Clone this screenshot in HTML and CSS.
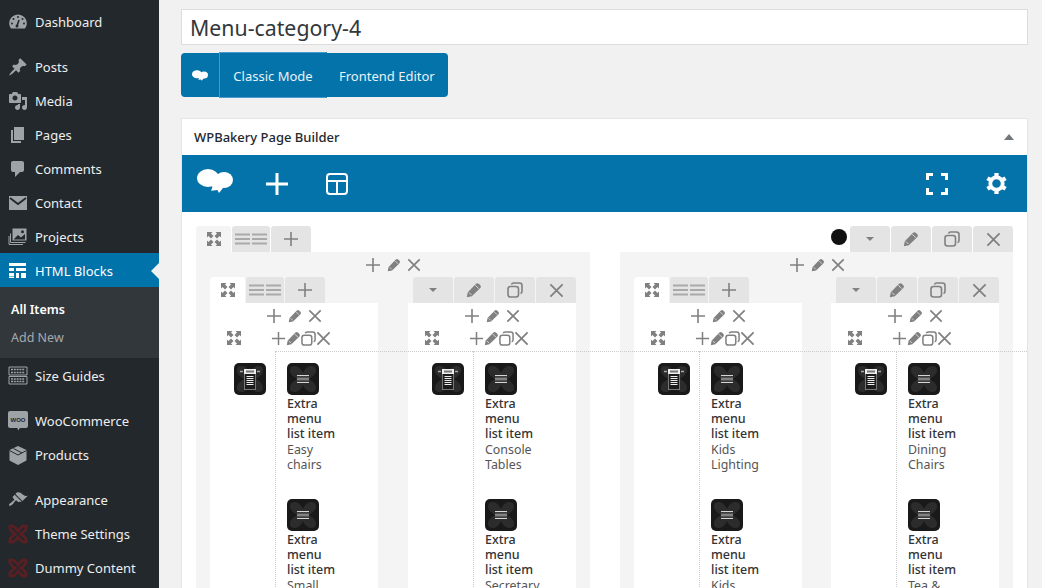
FILE: index.html
```html
<!DOCTYPE html>
<html lang="en">
<head>
    <meta charset="UTF-8">
    <title>Edit HTML Block</title>
    <link rel="stylesheet" href="styles.css">
</head>
<body>
    <svg class="sprite" xmlns="http://www.w3.org/2000/svg">
        <symbol id="i-plus" viewBox="0 0 16 16"><path d="M8 1v14M1 8h14" fill="none" stroke="currentColor" stroke-width="1.6"/></symbol>
        <symbol id="i-x" viewBox="0 0 16 16"><path d="M1.500 1.500l13 13M14.500 1.500l-13 13" fill="none" stroke="currentColor" stroke-width="1.900"/></symbol>
        <symbol id="i-pencil" viewBox="0 0 16 16"><path d="M.8 15.200l1-5 8-8.300c1-1 2.200-1 3.200 0l1.100 1.100c1 1 1 2.200 0 3.200L5.800 14.200z" fill="currentColor"/><path d="M9.300 3.200l3.500 3.500M3 10.500l2.500 2.500" stroke="#fff" stroke-width=".7"/></symbol>
        <symbol id="i-copy" viewBox="0 0 16 16"><rect x="1" y="4.500" width="10.500" height="10.500" rx="2.500" fill="none" stroke="currentColor" stroke-width="1.600"/><path d="M4.500 2.500c.3-.9 1.100-1.500 2-1.500h6c1.400 0 2.500 1.100 2.500 2.500v6c0 .9-.6 1.700-1.500 2" fill="none" stroke="currentColor" stroke-width="1.600"/></symbol>
        <symbol id="i-lines" viewBox="0 0 32 12"><path d="M0 1.500h15M17 1.500h15M0 6h15M17 6h15M0 10.500h15M17 10.500h15" stroke="currentColor" stroke-width="1.800"/></symbol>
        <symbol id="i-expand" viewBox="0 0 14 14"><path d="M0 0h5.500L4 1.500 6.500 4 4 6.500 1.500 4 0 5.500zM14 0v5.500L12.500 4 10 6.500 7.500 4 10 1.500 8.500 0zM14 14H8.500l1.500-1.500L7.500 10 10 7.500l2.500 2.500 1.500-1.500zM0 14V8.500L1.500 10 4 7.500 6.500 10 4 12.500 5.500 14z" fill="currentColor"/></symbol>
        <symbol id="i-cloud" viewBox="0 0 36 24"><ellipse cx="11" cy="9" rx="11" ry="9" fill="currentColor"/><ellipse cx="27" cy="11" rx="9" ry="8" fill="currentColor"/><path d="M10 12h18l-2 7-4 5-1.500-3-6.500.8 1.500-3.800z" fill="currentColor"/></symbol>
        <symbol id="i-tile-list" viewBox="0 0 32 32"><rect width="32" height="32" rx="5" fill="#191919"/><path d="M4 4c5-3 10 1 12 6 2-5 7-9 12-6 3 5-1 9-6 12 5 3 9 7 6 12-5 3-10-1-12-6-2 5-7 9-12 6-3-5 1-9 6-12C5 13 1 9 4 4z" fill="#2c2c2c"/><path d="M10 12.500h12M10 16h12M10 19.500h12" stroke="#d5d5d5" stroke-width="1.200"/><path d="M10 14.200h12M10 17.800h12" stroke="#666" stroke-width="1"/></symbol>
        <symbol id="i-tile-menu" viewBox="0 0 32 32"><rect width="32" height="32" rx="5" fill="#191919"/><path d="M4 4c5-3 10 1 12 6 2-5 7-9 12-6 3 5-1 9-6 12 5 3 9 7 6 12-5 3-10-1-12-6-2 5-7 9-12 6-3-5 1-9 6-12C5 13 1 9 4 4z" fill="#2c2c2c"/><rect x="10.500" y="9" width="11" height="17.500" fill="#1c1c1c" stroke="#777"/><rect x="10" y="6" width="12" height="5" fill="#eee"/><rect x="12" y="7.500" width="8" height="2" fill="#777"/><path d="M6 8.500h3M23 8.500h3" stroke="#aaa" stroke-width="1.500"/><path d="M12.500 13.500h7M12.500 15.500h7M12.500 17.500h7M12.500 19.500h7M12.500 21.500h7" stroke="#eee"/></symbol>
        <symbol id="i-x-logo" viewBox="0 0 20 20"><path d="M2 2c3-1 6 2 8 5 2-3 5-6 8-5 1 3-2 6-5 8 3 2 6 5 5 8-3 1-6-2-8-5-2 3-5 6-8 5-1-3 2-6 5-8C4 8 1 5 2 2z" fill="none" stroke="currentColor" stroke-width="2.800"/></symbol>
    </svg>

    <div class="wrap">
        <nav class="sidebar">
            <ul class="menu">
                <li class="menu-item">
                    <svg class="menu-icon" viewBox="0 0 20 20"><path d="M10 2.500a8.800 8.800 0 0 0-8.800 8.800c0 2 .7 3.800 1.800 5.200h14c1.100-1.400 1.800-3.200 1.800-5.200A8.800 8.800 0 0 0 10 2.500z" fill="currentColor"/><path d="M11 8l-1.800 5.500" stroke="#23282d" stroke-width="1.600"/><circle cx="9" cy="14" r="1.500" fill="#23282d"/><circle cx="10" cy="5" r="1" fill="#23282d"/><circle cx="5.500" cy="7" r="1" fill="#23282d"/><circle cx="14.500" cy="7" r="1" fill="#23282d"/><circle cx="4" cy="11.500" r="1" fill="#23282d"/><circle cx="16" cy="11.500" r="1" fill="#23282d"/></svg>
                    <span>Dashboard</span>
                </li>
                <li class="menu-item menu-sep">
                    <svg class="menu-icon" viewBox="0 0 20 20"><path d="M10.440 3.020l1.820-1.820 6.360 6.350-1.830 1.820c-1.050-.68-2.480-.57-3.410.36l-.75.75c-.92.93-1.040 2.350-.35 3.410l-1.830 1.820-2.410-2.410-2.800 2.790c-.42.42-3.380 2.710-3.800 2.290s1.860-3.390 2.280-3.810l2.790-2.790L4.100 9.360l1.830-1.820c1.050.69 2.480.57 3.400-.36l.75-.75c.93-.92 1.050-2.350.36-3.410z" fill="currentColor"/></svg>
                    <span>Posts</span>
                </li>
                <li class="menu-item">
                    <svg class="menu-icon" viewBox="0 0 20 20"><path d="M13 11V4c0-.55-.45-1-1-1h-1.670L9 1H5L3.670 3H2c-.55 0-1 .45-1 1v7c0 .55.45 1 1 1h10c.55 0 1-.45 1-1zM7 4.500c1.380 0 2.500 1.120 2.500 2.500S8.380 9.500 7 9.500 4.500 8.380 4.500 7 5.620 4.500 7 4.500zM14 6h5v10.500c0 1.380-1.120 2.500-2.500 2.500S14 17.880 14 16.500s1.120-2.500 2.500-2.500c.17 0 .34.02.5.05V9h-3V6zm-4 8.050V13h2v3.500c0 1.380-1.120 2.500-2.500 2.500S7 17.880 7 16.500 8.120 14 9.500 14c.17 0 .34.02.5.05z" fill="currentColor"/></svg>
                    <span>Media</span>
                </li>
                <li class="menu-item">
                    <svg class="menu-icon" viewBox="0 0 20 20"><path d="M6 15V2h10v13H6zm-1 1h8v2H3V5h2v11z" fill="currentColor"/></svg>
                    <span>Pages</span>
                </li>
                <li class="menu-item">
                    <svg class="menu-icon" viewBox="0 0 20 20"><path d="M5 2h9c1.100 0 2 .9 2 2v7c0 1.100-.9 2-2 2h-2l-5 5v-5H5c-1.100 0-2-.9-2-2V4c0-1.100.9-2 2-2z" fill="currentColor"/></svg>
                    <span>Comments</span>
                </li>
                <li class="menu-item">
                    <svg class="menu-icon" viewBox="0 0 20 20"><rect x="1" y="3" width="18" height="14" fill="currentColor"/><path d="M2 5l8 6 8-6" fill="none" stroke="#23282d" stroke-width="1.800"/></svg>
                    <span>Contact</span>
                </li>
                <li class="menu-item">
                    <svg class="menu-icon" viewBox="0 0 20 20"><path d="M1 9v8.500h14M2.500 6.500V15.500h15" fill="none" stroke="currentColor"/><rect x="4.500" y="1.500" width="14" height="12" fill="currentColor"/><path d="M6 12l4-4 3 2.500L17 7v5.500H6z" fill="#23282d"/><circle cx="14.500" cy="4.800" r="1.500" fill="#23282d"/></svg>
                    <span>Projects</span>
                </li>
                <li class="menu-item menu-current">
                    <svg class="menu-icon" viewBox="0 0 20 20"><path d="M1 2h17v3H1zM1 7h5v3H1zM8 7h10v3H8zM1 12h5v3H1zM8 12h3v5H8zM13 12h5v5h-5zM1 15.500h5V17H1z" fill="currentColor"/></svg>
                    <span>HTML Blocks</span>
                </li>
                <li class="submenu">
                    <div class="submenu-item submenu-active">All Items</div>
                    <div class="submenu-item">Add New</div>
                </li>
                <li class="menu-item menu-after-sub">
                    <svg class="menu-icon" viewBox="0 0 20 20"><path d="M1 1h18v8H1zM1 10.500h18V18H1z" fill="none" stroke="currentColor"/><path d="M3 3.500h14M3 6.500h14M3 13h14M3 15.500h14" stroke="currentColor" stroke-width="1.500" stroke-dasharray="2 .8"/></svg>
                    <span>Size Guides</span>
                </li>
                <li class="menu-item menu-sep">
                    <svg class="menu-icon menu-icon-woo" viewBox="0 0 20 20"><path d="M2 0h16a2 2 0 0 1 2 2v13a2 2 0 0 1-2 2h-6l-2 2.500-.5-2.500H2a2 2 0 0 1-2-2V2a2 2 0 0 1 2-2z" fill="currentColor"/><text class="woo-text" x="10" y="11">WOO</text></svg>
                    <span>WooCommerce</span>
                </li>
                <li class="menu-item">
                    <svg class="menu-icon" viewBox="0 0 20 20"><path d="M10 1l8.500 4v10.500L10 20l-8.500-4.500V5z" fill="currentColor"/><path d="M1.500 5.500L10 10l8.500-4.500M5.500 3.500L14 8" fill="none" stroke="#23282d"/></svg>
                    <span>Products</span>
                </li>
                <li class="menu-item menu-sep">
                    <svg class="menu-icon" viewBox="0 0 20 20"><path d="M14.480 11.060L7.410 3.990l1.500-1.500c.5-.56 2.300-.47 3.510.32 1.210.8 1.430 1.280 2.910 2.100 1.180.64 2.450 1.260 4.450.85zm-.71.710L6.700 4.700 4.930 6.470c-.39.39-.39 1.020 0 1.410l1.060 1.060c.39.39.39 1.030 0 1.420-.6.6-1.430 1.110-2.210 1.690-.35.26-.7.530-1.010.84C1.430 13.230.4 14.770 1.200 15.550c.79.79 2.330-.23 3.680-1.570.31-.31.58-.66.84-1.010.58-.78 1.090-1.610 1.690-2.210.39-.39 1.020-.39 1.410 0l1.060 1.060c.39.39 1.020.39 1.410 0z" fill="currentColor"/></svg>
                    <span>Appearance</span>
                </li>
                <li class="menu-item">
                    <svg class="menu-icon menu-icon-red"><use href="#i-x-logo"/></svg>
                    <span>Theme Settings</span>
                </li>
                <li class="menu-item">
                    <svg class="menu-icon menu-icon-red"><use href="#i-x-logo"/></svg>
                    <span>Dummy Content</span>
                </li>
            </ul>
        </nav>

        <main class="content">
            <div class="title-box">Menu-category-4</div>

            <div class="mode-bar">
                <span class="mode-logo"><svg class="ico-mode"><use href="#i-cloud"/></svg></span>
                <span class="mode-btn mode-btn-active">Classic Mode</span>
                <span class="mode-btn">Frontend Editor</span>
            </div>

            <section class="postbox">
                <div class="postbox-head">
                    <span>WPBakery Page Builder</span>
                    <span class="caret-up"></span>
                </div>
                <div class="toolbar">
                    <svg class="tb-logo"><use href="#i-cloud"/></svg>
                    <svg class="tb-plus" viewBox="0 0 22 22"><path d="M11 0v22M0 11h22" stroke="currentColor" stroke-width="3"/></svg>
                    <svg class="tb-layout" viewBox="0 0 22 22"><rect x="1" y="1" width="20" height="20" rx="3" fill="none" stroke="currentColor" stroke-width="2"/><path d="M1 8h20M11 8v13" stroke="currentColor" stroke-width="2"/></svg>
                    <svg class="tb-full" viewBox="0 0 22 22"><path d="M1.500 7V1.500H7M15 1.500h5.500V7M20.500 15v5.500H15M7 20.500H1.500V15" fill="none" stroke="currentColor" stroke-width="3"/></svg>
                    <svg class="tb-gear" viewBox="0 0 22 22"><circle cx="11" cy="11" r="6.500" fill="none" stroke="currentColor" stroke-width="4"/><path d="M11 0v4M11 18v4M1.500 5.500l3.500 2M17 14.500l3.500 2M1.500 16.500l3.500-2M17 7.500l3.500-2" stroke="currentColor" stroke-width="4.500"/></svg>
                </div>

                <div class="builder">
                    <div class="row-head">
                        <div class="tabs">
                            <span class="tab tab-first tab-soft"><svg class="ico-14"><use href="#i-expand"/></svg></span>
                            <span class="tab tab-lines"><svg class="ico-lines"><use href="#i-lines"/></svg></span>
                            <span class="tab"><svg class="ico-16"><use href="#i-plus"/></svg></span>
                        </div>
                        <div class="tabs">
                            <span class="color-dot"></span>
                            <span class="tab"><span class="caret-down"></span></span>
                            <span class="tab"><svg class="ico-16"><use href="#i-pencil"/></svg></span>
                            <span class="tab"><svg class="ico-16"><use href="#i-copy"/></svg></span>
                            <span class="tab"><svg class="ico-15"><use href="#i-x"/></svg></span>
                        </div>
                    </div>

                    <div class="row-body">
                        <div class="col col-wide">
                            <div class="col-actions">
                                <svg class="ico-16"><use href="#i-plus"/></svg>
                                <svg class="ico-14"><use href="#i-pencil"/></svg>
                                <svg class="ico-14"><use href="#i-x"/></svg>
                            </div>
                            <div class="inner-row">
                                <div class="inner">
                                    <div class="tabs">
                                        <span class="tab tab-first tab-white"><svg class="ico-14"><use href="#i-expand"/></svg></span>
                                        <span class="tab tab-lines"><svg class="ico-lines"><use href="#i-lines"/></svg></span>
                                        <span class="tab"><svg class="ico-16"><use href="#i-plus"/></svg></span>
                                    </div>
                                    <div class="inner-body">
                                        <div class="inner-actions">
                                            <svg class="ico-16"><use href="#i-plus"/></svg>
                                            <svg class="ico-14"><use href="#i-pencil"/></svg>
                                            <svg class="ico-14"><use href="#i-x"/></svg>
                                        </div>
                                        <div class="block-actions">
                                            <svg class="ico-14 block-expand"><use href="#i-expand"/></svg>
                                            <svg class="ico-15"><use href="#i-plus"/></svg>
                                            <svg class="ico-15"><use href="#i-pencil"/></svg>
                                            <svg class="ico-15"><use href="#i-copy"/></svg>
                                            <svg class="ico-15"><use href="#i-x"/></svg>
                                        </div>
                                        <div class="cells">
                                            <div class="cell-left"><svg class="tile"><use href="#i-tile-menu"/></svg></div>
                                            <div class="cell-right">
                                                <div class="widget">
                                                    <svg class="tile"><use href="#i-tile-list"/></svg>
                                                    <div class="widget-title">Extra menu list item</div>
                                                    <div class="widget-text">Easy chairs</div>
                                                </div>
                                                <div class="widget">
                                                    <svg class="tile"><use href="#i-tile-list"/></svg>
                                                    <div class="widget-title">Extra menu list item</div>
                                                    <div class="widget-text">Small</div>
                                                </div>
                                            </div>
                                        </div>
                                    </div>
                                </div>
                                <div class="inner">
                                    <div class="tabs tabs-right">
                                        <span class="tab"><span class="caret-down"></span></span>
                                        <span class="tab"><svg class="ico-16"><use href="#i-pencil"/></svg></span>
                                        <span class="tab"><svg class="ico-16"><use href="#i-copy"/></svg></span>
                                        <span class="tab"><svg class="ico-15"><use href="#i-x"/></svg></span>
                                    </div>
                                    <div class="inner-body">
                                        <div class="inner-actions">
                                            <svg class="ico-16"><use href="#i-plus"/></svg>
                                            <svg class="ico-14"><use href="#i-pencil"/></svg>
                                            <svg class="ico-14"><use href="#i-x"/></svg>
                                        </div>
                                        <div class="block-actions">
                                            <svg class="ico-14 block-expand"><use href="#i-expand"/></svg>
                                            <svg class="ico-15"><use href="#i-plus"/></svg>
                                            <svg class="ico-15"><use href="#i-pencil"/></svg>
                                            <svg class="ico-15"><use href="#i-copy"/></svg>
                                            <svg class="ico-15"><use href="#i-x"/></svg>
                                        </div>
                                        <div class="cells">
                                            <div class="cell-left"><svg class="tile"><use href="#i-tile-menu"/></svg></div>
                                            <div class="cell-right">
                                                <div class="widget">
                                                    <svg class="tile"><use href="#i-tile-list"/></svg>
                                                    <div class="widget-title">Extra menu list item</div>
                                                    <div class="widget-text">Console Tables</div>
                                                </div>
                                                <div class="widget">
                                                    <svg class="tile"><use href="#i-tile-list"/></svg>
                                                    <div class="widget-title">Extra menu list item</div>
                                                    <div class="widget-text">Secretary</div>
                                                </div>
                                            </div>
                                        </div>
                                    </div>
                                </div>
                            </div>
                        </div>

                        <div class="col">
                            <div class="col-actions">
                                <svg class="ico-16"><use href="#i-plus"/></svg>
                                <svg class="ico-14"><use href="#i-pencil"/></svg>
                                <svg class="ico-14"><use href="#i-x"/></svg>
                            </div>
                            <div class="inner-row">
                                <div class="inner">
                                    <div class="tabs">
                                        <span class="tab tab-first tab-white"><svg class="ico-14"><use href="#i-expand"/></svg></span>
                                        <span class="tab tab-lines"><svg class="ico-lines"><use href="#i-lines"/></svg></span>
                                        <span class="tab"><svg class="ico-16"><use href="#i-plus"/></svg></span>
                                    </div>
                                    <div class="inner-body">
                                        <div class="inner-actions">
                                            <svg class="ico-16"><use href="#i-plus"/></svg>
                                            <svg class="ico-14"><use href="#i-pencil"/></svg>
                                            <svg class="ico-14"><use href="#i-x"/></svg>
                                        </div>
                                        <div class="block-actions">
                                            <svg class="ico-14 block-expand"><use href="#i-expand"/></svg>
                                            <svg class="ico-15"><use href="#i-plus"/></svg>
                                            <svg class="ico-15"><use href="#i-pencil"/></svg>
                                            <svg class="ico-15"><use href="#i-copy"/></svg>
                                            <svg class="ico-15"><use href="#i-x"/></svg>
                                        </div>
                                        <div class="cells">
                                            <div class="cell-left"><svg class="tile"><use href="#i-tile-menu"/></svg></div>
                                            <div class="cell-right">
                                                <div class="widget">
                                                    <svg class="tile"><use href="#i-tile-list"/></svg>
                                                    <div class="widget-title">Extra menu list item</div>
                                                    <div class="widget-text">Kids Lighting</div>
                                                </div>
                                                <div class="widget">
                                                    <svg class="tile"><use href="#i-tile-list"/></svg>
                                                    <div class="widget-title">Extra menu list item</div>
                                                    <div class="widget-text">Kids</div>
                                                </div>
                                            </div>
                                        </div>
                                    </div>
                                </div>
                                <div class="inner">
                                    <div class="tabs tabs-right">
                                        <span class="tab"><span class="caret-down"></span></span>
                                        <span class="tab"><svg class="ico-16"><use href="#i-pencil"/></svg></span>
                                        <span class="tab"><svg class="ico-16"><use href="#i-copy"/></svg></span>
                                        <span class="tab"><svg class="ico-15"><use href="#i-x"/></svg></span>
                                    </div>
                                    <div class="inner-body">
                                        <div class="inner-actions">
                                            <svg class="ico-16"><use href="#i-plus"/></svg>
                                            <svg class="ico-14"><use href="#i-pencil"/></svg>
                                            <svg class="ico-14"><use href="#i-x"/></svg>
                                        </div>
                                        <div class="block-actions">
                                            <svg class="ico-14 block-expand"><use href="#i-expand"/></svg>
                                            <svg class="ico-15"><use href="#i-plus"/></svg>
                                            <svg class="ico-15"><use href="#i-pencil"/></svg>
                                            <svg class="ico-15"><use href="#i-copy"/></svg>
                                            <svg class="ico-15"><use href="#i-x"/></svg>
                                        </div>
                                        <div class="cells">
                                            <div class="cell-left"><svg class="tile"><use href="#i-tile-menu"/></svg></div>
                                            <div class="cell-right">
                                                <div class="widget">
                                                    <svg class="tile"><use href="#i-tile-list"/></svg>
                                                    <div class="widget-title">Extra menu list item</div>
                                                    <div class="widget-text">Dining Chairs</div>
                                                </div>
                                                <div class="widget">
                                                    <svg class="tile"><use href="#i-tile-list"/></svg>
                                                    <div class="widget-title">Extra menu list item</div>
                                                    <div class="widget-text">Tea &amp;</div>
                                                </div>
                                            </div>
                                        </div>
                                    </div>
                                </div>
                            </div>
                        </div>
                    </div>
                    <div class="dotted-line"></div>
                </div>
            </section>
        </main>
    </div>
</body>
</html>
```

FILE: styles.css
```css
html, body {
    margin: 0;
    height: 100%;
    overflow: hidden;
}

body {
    font-family: "Noto Sans", "Open Sans", sans-serif;
    font-size: 13px;
    background-color: #f1f1f1;
    color: #32373c;
}

.sprite {
    display: none;
}

.wrap {
    display: flex;
    height: 588px;
    overflow: hidden;
}

/* sidebar */

.sidebar {
    width: 159px;
    flex: none;
    background-color: #23282d;
    color: #eee;
}

.menu {
    list-style: none;
    margin: 0;
    padding: 5px 0 0;
}

.menu-item {
    display: flex;
    align-items: center;
    height: 34px;
    padding-left: 8px;
    font-size: 13px;
    color: #eee;
}

.menu-sep {
    margin-top: 11px;
}

.menu-after-sub {
    margin-top: 1px;
}

.menu-icon {
    width: 20px;
    height: 20px;
    flex: none;
    margin-right: 7px;
    color: #9ea3a8;
}

.menu-icon-red {
    color: #5a1f23;
}

.woo-text {
    font-family: "Liberation Sans", sans-serif;
    font-size: 6px;
    font-weight: 700;
    fill: #23282d;
    text-anchor: middle;
}

.menu-current {
    height: 32px;
    margin-top: -1px;
    padding-top: 2px;
    background-color: #0073aa;
    color: #fff;
}

.menu-current .menu-icon {
    color: #fff;
}

.menu-current::after {
    content: "";
    margin-left: auto;
    border: 8px solid transparent;
    border-right-color: #f1f1f1;
    border-left-width: 0;
}

.submenu {
    background-color: #32373c;
    padding: 9px 0 6px;
}

.submenu-item {
    height: 28px;
    line-height: 28px;
    padding-left: 11px;
    font-size: 12.500px;
    color: #a5a9ad;
}

.submenu-active {
    color: #fff;
    font-weight: 600;
}

/* main column */

.content {
    flex: 1;
    min-width: 0;
    padding: 9px 14px 0 22px;
}

.title-box {
    height: 34px;
    line-height: 35px;
    padding-left: 8px;
    background-color: #fff;
    border: 1px solid #ddd;
    font-size: 21.300px;
    color: #32373c;
}

.mode-bar {
    display: flex;
    align-items: stretch;
    width: 267px;
    height: 44px;
    margin-top: 8px;
    background-color: #0473aa;
    border-radius: 4px;
    color: #e8f2f7;
}

.mode-logo {
    width: 38px;
    display: flex;
    align-items: center;
    justify-content: center;
}

.ico-mode {
    width: 16px;
    height: 11px;
    color: #fff;
}

.mode-btn {
    display: flex;
    align-items: center;
    padding: 1px 12px 0;
    font-size: 13px;
}

.mode-btn-active {
    width: 108px;
    box-sizing: border-box;
    justify-content: center;
    margin: -1px 0;
    padding: 1px 0 0;
    border: 1px solid #4b98cb;
    border-right-color: #0473aa;
    background-color: #0473aa;
}

.postbox {
    margin-top: 21px;
    background-color: #fff;
    border: 1px solid #e5e5e5;
    border-bottom: 0;
    height: 470px;
}

.postbox-head {
    display: flex;
    align-items: center;
    justify-content: space-between;
    height: 36px;
    padding: 0 13px 0 12px;
    font-size: 13px;
    font-weight: 500;
    color: #23282d;
}

.caret-up {
    border: 5px solid transparent;
    border-bottom: 6px solid #72777c;
    border-top: 0;
}

.toolbar {
    display: flex;
    align-items: center;
    height: 57px;
    padding: 0 20px 0 15px;
    background-color: #0473aa;
    color: #fff;
}

.tb-logo {
    width: 36px;
    height: 24px;
    margin-top: -6px;
}

.tb-plus {
    width: 22px;
    height: 22px;
    margin-left: 33px;
}

.tb-layout {
    width: 22px;
    height: 22px;
    margin-left: 38px;
}

.tb-full {
    width: 22px;
    height: 22px;
    margin-left: auto;
}

.tb-gear {
    width: 21px;
    height: 21px;
    margin-left: 38px;
}

/* builder rows */

.builder {
    position: relative;
    padding: 14px 14px 0;
    color: #808080;
}

.row-head {
    display: flex;
    justify-content: space-between;
    height: 26px;
}

.tabs {
    display: flex;
    align-items: flex-start;
    gap: 1px;
    height: 26px;
}

.tabs-right {
    justify-content: flex-end;
}

.tab {
    display: flex;
    align-items: center;
    justify-content: center;
    width: 40px;
    height: 26px;
    background-color: #e4e4e4;
    border-radius: 3px 3px 0 0;
}

.tab-first {
    width: 35px;
}

.tab-lines {
    width: 38px;
    color: #a9a9a9;
}

.tab-soft {
    background-color: #f4f4f4;
}

.tab-white {
    background-color: #fff;
}

.color-dot {
    width: 16px;
    height: 16px;
    margin: 3px 2px 0 0;
    border-radius: 50%;
    background-color: #111;
}

.caret-down {
    border: 4px solid transparent;
    border-top: 4px solid #808080;
    border-bottom: 0;
}

.ico-14 {
    width: 14px;
    height: 14px;
}

.ico-15 {
    width: 15px;
    height: 15px;
}

.ico-16 {
    width: 16px;
    height: 16px;
}

.ico-lines {
    width: 32px;
    height: 12px;
}

.row-body {
    display: flex;
    justify-content: space-between;
    height: 336px;
}

.col {
    width: 393px;
    padding: 0 14px;
    box-sizing: border-box;
    background-color: #f4f4f4;
}

.col-wide {
    width: 394px;
}

.col-actions {
    display: flex;
    align-items: center;
    justify-content: center;
    gap: 6px;
    height: 25px;
}

.inner-row {
    display: flex;
    justify-content: space-between;
}

.inner {
    width: 168px;
}

.inner-body {
    height: 285px;
    overflow: hidden;
    background-color: #fff;
}

.inner-actions {
    display: flex;
    align-items: center;
    justify-content: center;
    gap: 6px;
    height: 26px;
}

.block-actions {
    display: flex;
    align-items: center;
    height: 18px;
    padding: 0 0 4px 17px;
}

.block-expand {
    margin-right: 30px;
}

.cells {
    display: flex;
}

.cell-left {
    width: 65px;
    flex: none;
    box-sizing: border-box;
    padding: 12px 0 0 24px;
}

.cell-right {
    flex: 1;
    padding: 12px 0 0 11px;
    border-left: 1px dotted #ccc;
}

.tile {
    display: block;
    width: 32px;
    height: 32px;
}

.widget {
    width: 52px;
    height: 136px;
    font-size: 12.400px;
    line-height: 15.200px;
    color: #444;
}

.widget-title {
    margin-top: 1px;
    color: #333;
    font-size: 12.500px;
    font-weight: 500;
}

.widget-text {
    color: #555;
}

.dotted-line {
    position: absolute;
    top: 139px;
    left: 93px;
    right: 0;
    border-top: 1px dotted #ccc;
}
```
